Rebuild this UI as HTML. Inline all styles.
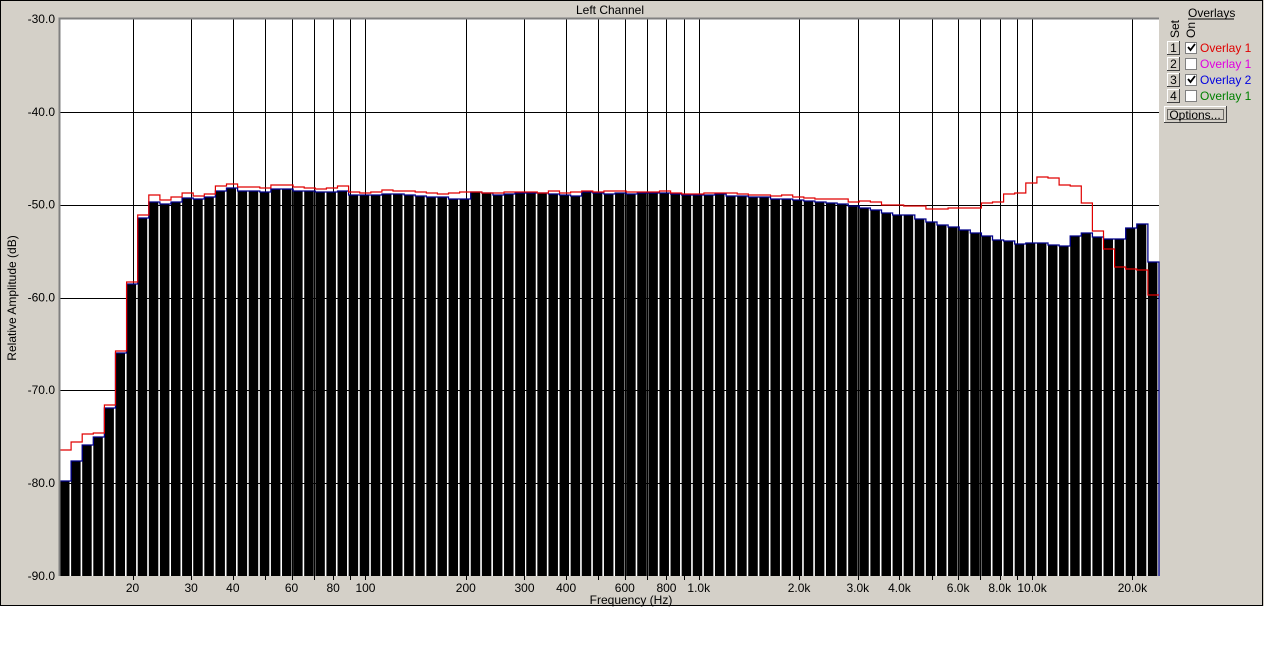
<!DOCTYPE html>
<html><head><meta charset="utf-8"><style>
body{margin:0;background:#fff;width:1264px;height:654px;overflow:hidden;font-family:"Liberation Sans",sans-serif;}
</style></head><body>
<svg id="s" width="1264" height="654" xmlns="http://www.w3.org/2000/svg" font-family="Liberation Sans, sans-serif" font-size="12">
<rect x="0" y="0" width="1264" height="606" fill="#d4d0c8"/>
<rect x="0.5" y="0.5" width="1262" height="605" fill="none" stroke="#000"/>
<rect x="60" y="19" width="1099" height="557" fill="#fff"/>
<g id="grid" stroke="#000" stroke-width="1"></g>
<g id="bars"></g>
<path id="blue" fill="none" stroke="#00008b" stroke-width="1.3"/>
<path id="red" fill="none" stroke="#e00000" stroke-width="1.2"/>
<path d="M59.5 576 V18.5 H1159" fill="none" stroke="#808080" stroke-width="2"/>
<g id="lbl" fill="#000"></g>
<text x="610" y="14" text-anchor="middle">Left Channel</text>
<text x="631" y="604" text-anchor="middle">Frequency (Hz)</text>
<text transform="translate(16,298) rotate(-90)" text-anchor="middle">Relative Amplitude (dB)</text>
<text x="1188" y="17">Overlays</text><line x1="1188" y1="19" x2="1234" y2="19" stroke="#000"/>
<text transform="translate(1179,38) rotate(-90)">Set</text>
<text transform="translate(1195,38) rotate(-90)">On</text>
<g id="leg"></g>
<rect x="1164.5" y="106.5" width="62" height="16" fill="#d4d0c8" stroke="#404040"/>
<path d="M1164.5 122 V106.5 H1226" stroke="#fff" fill="none"/>
<rect x="1167.5" y="109.5" width="56" height="10" fill="none" stroke="#000" stroke-dasharray="1 1"/>
<text x="1195" y="119" text-anchor="middle">Options...</text>
</svg>
<script>
var NS="http://www.w3.org/2000/svg";
function el(p,t,a,txt){var e=document.createElementNS(NS,t);for(var k in a)e.setAttribute(k,a[k]);if(txt!=null)e.textContent=txt;document.getElementById(p).appendChild(e);return e;}
function fx(f){return 132.5+333.3*Math.log10(f/20);}
var g=[20,30,40,50,60,70,80,90,100,200,300,400,500,600,700,800,900,1000,2000,3000,4000,5000,6000,7000,8000,9000,10000,20000];
g.forEach(function(f){var x=Math.round(fx(f))+0.5;el("grid","line",{x1:x,y1:19,x2:x,y2:576});el("lbl","line",{x1:x,y1:576,x2:x,y2:580,stroke:"#000"});});
[112,205,298,390,483].forEach(function(y){el("grid","line",{x1:60,y1:y+.5,x2:1159,y2:y+.5});});
var yl=["-30.0","-40.0","-50.0","-60.0","-70.0","-80.0","-90.0"];
yl.forEach(function(t,i){el("lbl","text",{x:55,y:19+i*92.8+4,"text-anchor":"end"},t);});
var xl=[[20,"20"],[30,"30"],[40,"40"],[60,"60"],[80,"80"],[100,"100"],[200,"200"],[300,"300"],[400,"400"],[600,"600"],[800,"800"],[1000,"1.0k"],[2000,"2.0k"],[3000,"3.0k"],[4000,"4.0k"],[6000,"6.0k"],[8000,"8.0k"],[10000,"10.0k"],[20000,"20.0k"]];
xl.forEach(function(a){el("lbl","text",{x:fx(a[0]),y:592,"text-anchor":"middle"},a[1]);});
var blue=[481,461,445,437,408,353,284,218,202,204,202,198,199,197,191,188,191,191,192,189,189,191,191,192,192,191,195,195,195,194,194,195,196,197,197,199,199,192,193,195,194,193,193,193,194,195,196,192,193,194,193,194,
193,193,193,194,195,195,195,194,196,196,197,197,199,199,200,201,202,203,204,206,208,210,213,215,215,219,222,225,227,230,233,236,240,241,244,243,243,245,246,236,233,237,239,239,228,224,262];
var rz=[65,65,62,68,72,72,68,70,68,73,75,75,78,75,80,85,87,87,87,97,94,97,105,105,107,108,117,117,115,113,113,100,97,72,70,40,20,25,45,48,100,182,238,292,297,300,375];
var red=[450,442,434,433,405,351,282,215,195,200,197,193,196,194,186,184,187,187,188,185,185,187,188,189,188,186,192,193,192,190,191,191,192,193,194,193,192,192,193,193,192,192,192,193,191,193,192,191,192,191,191,192];
rz.forEach(function(v){red.push(Math.round(170+v/3));});
var N=blue.length,w=1099/N,bd="",rd="";
for(var i=0;i<N;i++){var x0=60+i*w,x1=x0+w;
el("bars","rect",{x:x0,y:blue[i],width:w-1.6,height:576-blue[i],fill:"#000"});
bd+=(i?"L":"M")+x0.toFixed(1)+" "+blue[i]+"H"+(x1).toFixed(1);
rd+=(i?"L":"M")+x0.toFixed(1)+" "+red[i]+"H"+(x1).toFixed(1);}
bd+="V576";
document.getElementById("blue").setAttribute("d",bd);
document.getElementById("red").setAttribute("d",rd);
var rows=[["1",1,"#e00000","Overlay 1"],["2",0,"#e000e0","Overlay 1"],["3",1,"#0000e0","Overlay 2"],["4",0,"#008000","Overlay 1"]];
rows.forEach(function(r,i){var y=41+i*16;
el("leg","rect",{x:1167.5,y:y+.5,width:12,height:13,fill:"#d4d0c8",stroke:"#404040"});
el("leg","path",{d:"M1167.5 "+(y+13)+" V"+(y+.5)+" H1179",stroke:"#fff",fill:"none"});
el("leg","text",{x:1173.5,y:y+11,"text-anchor":"middle"},r[0]);
el("leg","rect",{x:1185.5,y:y+1.5,width:11,height:11,fill:"#fff",stroke:"#808080"});
if(r[1])el("leg","path",{d:"M1188 "+(y+6)+" l2.5 3 l4.5 -6",stroke:"#000","stroke-width":1.8,fill:"none"});
el("leg","text",{x:1200,y:y+11,fill:r[2]},r[3]);});
</script>
</body></html>
